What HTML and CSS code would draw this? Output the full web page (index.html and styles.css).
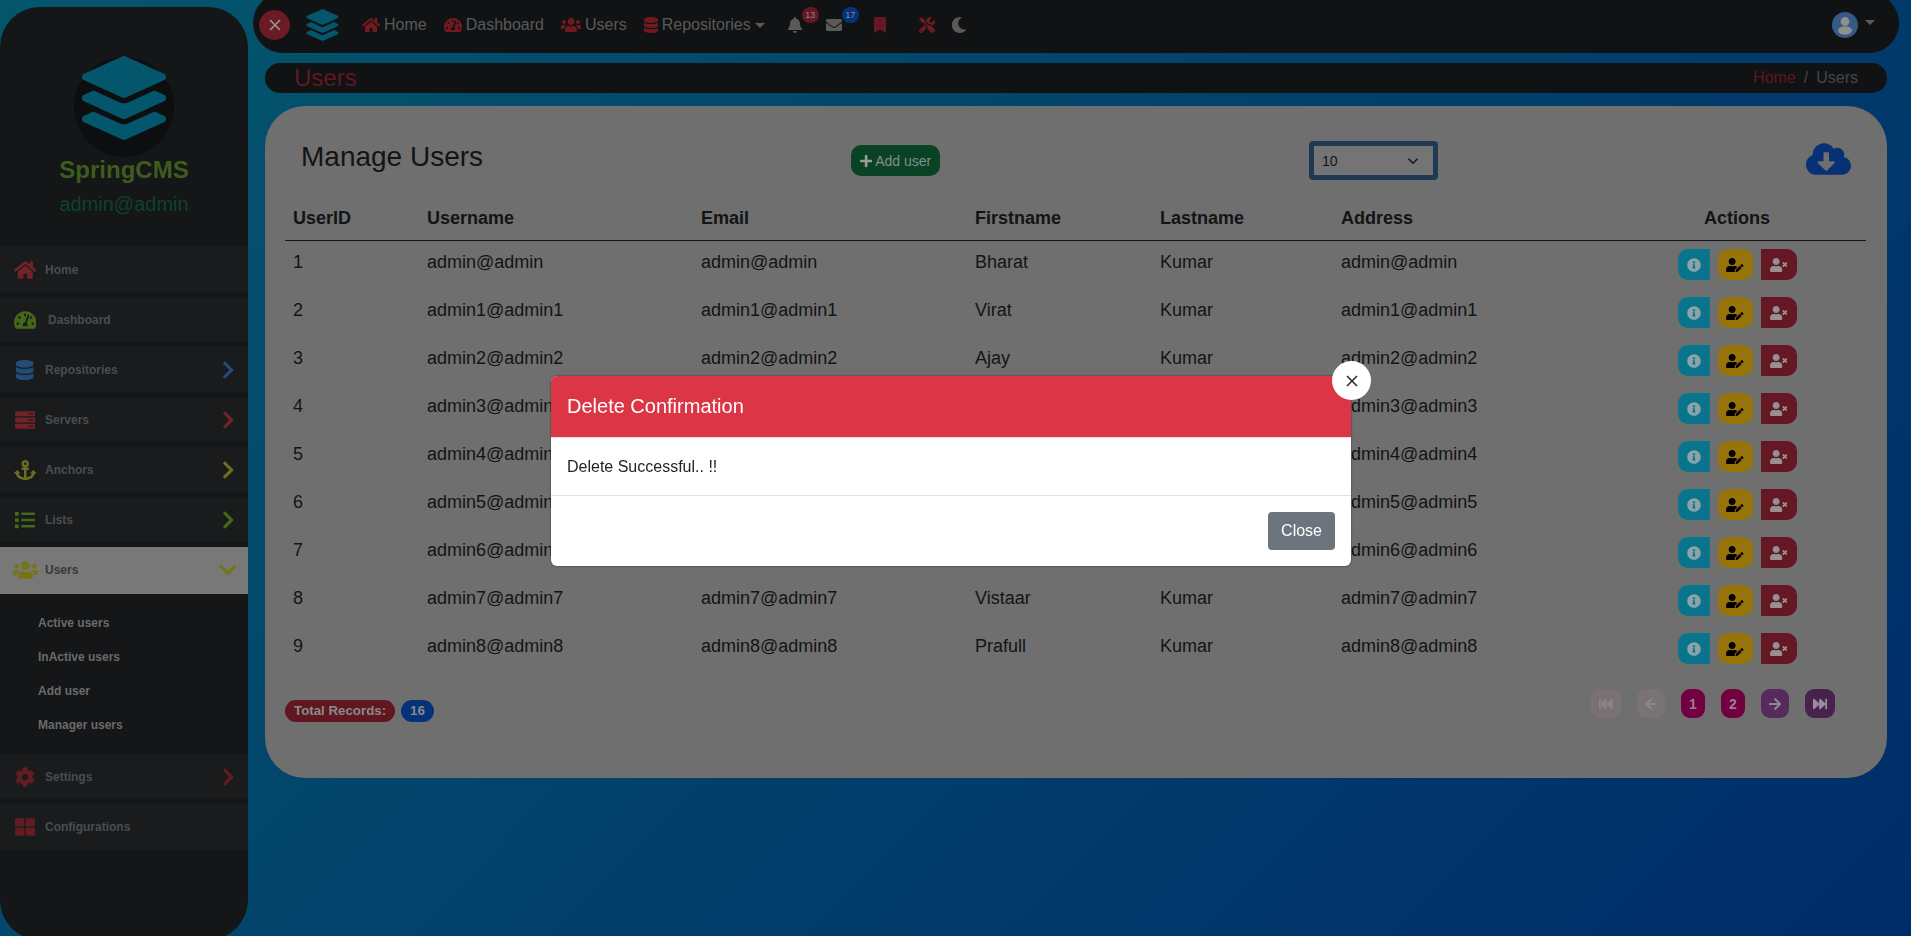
FILE: index.html
```html
<!doctype html>
<html>
 <head>
	<meta charset="UTF-8">
	<title>SpringCMS - Manage Users</title>
	<link rel="stylesheet" href="styles.css">
 </head>
 <body>
	<!-- icon paths, used by every <use> below -->
	<svg class="sprite">
		<defs>
			<path id="i_home" d="M280.37 148.26L96 300.11V464a16 16 0 0 0 16 16l112.06-.29a16 16 0 0 0 15.92-16V368a16 16 0 0 1 16-16h64a16 16 0 0 1 16 16v95.64a16 16 0 0 0 16 16.05L464 480a16 16 0 0 0 16-16V300L295.67 148.26a12.19 12.19 0 0 0-15.3 0zM571.6 251.47L488 182.56V44.05a12 12 0 0 0-12-12h-56a12 12 0 0 0-12 12v72.61L318.47 43a48 48 0 0 0-61 0L4.34 251.47a12 12 0 0 0-1.6 16.9l25.5 31A12 12 0 0 0 45.15 301l235.22-193.74a12.19 12.19 0 0 1 15.3 0L530.9 301a12 12 0 0 0 16.9-1.6l25.5-31a12 12 0 0 0-1.7-16.93z"/>
			<path id="i_gauge" d="M288 32C128.94 32 0 160.94 0 320c0 52.8 14.25 102.26 39.06 144.8 5.61 9.62 16.3 15.2 27.44 15.2h443c11.14 0 21.83-5.58 27.44-15.2C561.75 422.26 576 372.8 576 320c0-159.06-128.94-288-288-288zm0 64c14.71 0 26.58 10.13 30.32 23.65-1.11 2.26-2.64 4.23-3.45 6.67l-9.22 27.67c-5.13 3.49-10.97 6.01-17.64 6.01-17.67 0-32-14.33-32-32S270.33 96 288 96zM96 384c-17.67 0-32-14.33-32-32s14.33-32 32-32 32 14.33 32 32-14.33 32-32 32zm48-160c-17.67 0-32-14.33-32-32s14.33-32 32-32 32 14.33 32 32-14.33 32-32 32zm246.77-72.41l-61.33 184C343.13 347.33 352 364.54 352 384c0 11.72-3.38 22.55-8.88 32H232.88c-5.5-9.45-8.88-20.28-8.88-32 0-33.94 26.5-61.43 59.9-63.59l61.34-184.01c4.17-12.56 17.73-19.45 30.36-15.17 12.57 4.19 19.35 17.79 15.17 30.36zm14.66 57.2l15.52-46.55c3.47-1.29 7.13-2.23 11.05-2.23 17.67 0 32 14.33 32 32s-14.33 32-32 32c-11.38-.01-20.89-6.28-26.57-15.22zM480 384c-17.67 0-32-14.33-32-32s14.33-32 32-32 32 14.33 32 32-14.33 32-32 32z"/>
			<path id="i_users" d="M96 224c35.3 0 64-28.7 64-64s-28.7-64-64-64-64 28.7-64 64 28.7 64 64 64zm448 0c35.3 0 64-28.7 64-64s-28.7-64-64-64-64 28.7-64 64 28.7 64 64 64zm32 32h-64c-17.6 0-33.5 7.1-45.1 18.6 40.3 22.1 68.9 62 75.1 109.4h66c17.7 0 32-14.3 32-32v-32c0-35.3-28.7-64-64-64zm-256 0c61.9 0 112-50.1 112-112S381.9 32 320 32 208 82.1 208 144s50.1 112 112 112zm76.8 32h-8.3c-20.8 10-43.9 16-68.5 16s-47.6-6-68.5-16h-8.3C179.6 288 128 339.6 128 403.2V432c0 26.5 21.5 48 48 48h288c26.5 0 48-21.5 48-48v-28.8c0-63.6-51.6-115.2-115.2-115.2zm-223.7-13.4C161.5 263.1 145.6 256 128 256H64c-35.3 0-64 28.7-64 64v32c0 17.7 14.3 32 32 32h65.9c6.3-47.4 34.9-87.3 75.2-109.4z"/>
			<path id="i_db" d="M448 73.143v45.714C448 159.143 347.667 192 224 192S0 159.143 0 118.857V73.143C0 32.857 100.333 0 224 0s224 32.857 224 73.143zM448 176v102.857C448 319.143 347.667 352 224 352S0 319.143 0 278.857V176c48.125 33.143 136.208 48.572 224 48.572S399.874 209.143 448 176zm0 160v102.857C448 479.143 347.667 512 224 512S0 479.143 0 438.857V336c48.125 33.143 136.208 48.572 224 48.572S399.874 369.143 448 336z"/>
			<path id="i_server" d="M480 160H32c-17.673 0-32-14.327-32-32V64c0-17.673 14.327-32 32-32h448c17.673 0 32 14.327 32 32v64c0 17.673-14.327 32-32 32zm-48-88c-13.255 0-24 10.745-24 24s10.745 24 24 24 24-10.745 24-24-10.745-24-24-24zm-64 0c-13.255 0-24 10.745-24 24s10.745 24 24 24 24-10.745 24-24-10.745-24-24-24zm112 248H32c-17.673 0-32-14.327-32-32v-64c0-17.673 14.327-32 32-32h448c17.673 0 32 14.327 32 32v64c0 17.673-14.327 32-32 32zm-48-88c-13.255 0-24 10.745-24 24s10.745 24 24 24 24-10.745 24-24-10.745-24-24-24zm-64 0c-13.255 0-24 10.745-24 24s10.745 24 24 24 24-10.745 24-24-10.745-24-24-24zm112 248H32c-17.673 0-32-14.327-32-32v-64c0-17.673 14.327-32 32-32h448c17.673 0 32 14.327 32 32v64c0 17.673-14.327 32-32 32zm-48-88c-13.255 0-24 10.745-24 24s10.745 24 24 24 24-10.745 24-24-10.745-24-24-24zm-64 0c-13.255 0-24 10.745-24 24s10.745 24 24 24 24-10.745 24-24-10.745-24-24-24z"/>
			<path id="i_anchor" d="M12.971 352h32.394C67.172 454.735 181.944 512 288 512c106.229 0 220.853-57.38 242.635-160h32.394c10.691 0 16.045-12.926 8.485-20.485l-67.029-67.029c-4.686-4.686-12.284-4.686-16.971 0l-67.029 67.029c-7.56 7.56-2.206 20.485 8.485 20.485h35.146c-20.29 54.317-84.963 86.588-144.117 94.015V256h52c6.627 0 12-5.373 12-12v-40c0-6.627-5.373-12-12-12h-52v-5.47c37.281-13.178 63.995-48.725 64-90.518C384.005 43.772 341.605.738 289.37.01 235.723-.739 192 42.525 192 96c0 41.798 26.716 77.35 64 90.53V192h-52c-6.627 0-12 5.373-12 12v40c0 6.627 5.373 12 12 12h52v190.015c-58.936-7.399-123.82-39.679-144.117-94.015h35.146c10.691 0 16.045-12.926 8.485-20.485l-67.029-67.029c-4.686-4.686-12.284-4.686-16.971 0L4.485 331.515C-3.074 339.074 2.28 352 12.971 352zM288 64c17.645 0 32 14.355 32 32s-14.355 32-32 32-32-14.355-32-32 14.355-32 32-32z"/>
			<path id="i_list" d="M80 368H16a16 16 0 0 0-16 16v64a16 16 0 0 0 16 16h64a16 16 0 0 0 16-16v-64a16 16 0 0 0-16-16zm0-320H16A16 16 0 0 0 0 64v64a16 16 0 0 0 16 16h64a16 16 0 0 0 16-16V64a16 16 0 0 0-16-16zm0 160H16a16 16 0 0 0-16 16v64a16 16 0 0 0 16 16h64a16 16 0 0 0 16-16v-64a16 16 0 0 0-16-16zm416 176H176a16 16 0 0 0-16 16v32a16 16 0 0 0 16 16h320a16 16 0 0 0 16-16v-32a16 16 0 0 0-16-16zm0-320H176a16 16 0 0 0-16 16v32a16 16 0 0 0 16 16h320a16 16 0 0 0 16-16V80a16 16 0 0 0-16-16zm0 160H176a16 16 0 0 0-16 16v32a16 16 0 0 0 16 16h320a16 16 0 0 0 16-16v-32a16 16 0 0 0-16-16z"/>
			<path id="i_cog" d="M487.4 315.7l-42.6-24.6c4.3-23.2 4.3-47 0-70.2l42.6-24.6c4.9-2.8 7.1-8.6 5.5-14-11.1-35.6-30-67.8-54.7-94.6-3.8-4.1-10-5.1-14.8-2.3L380.8 110c-17.9-15.4-38.5-27.3-60.8-35.1V25.8c0-5.6-3.9-10.5-9.4-11.7-36.7-8.2-74.3-7.8-109.2 0-5.5 1.2-9.4 6.1-9.4 11.7V75c-22.2 7.9-42.8 19.8-60.8 35.1L88.7 85.5c-4.9-2.8-11-1.9-14.8 2.3-24.7 26.7-43.6 58.9-54.7 94.6-1.7 5.4.6 11.2 5.5 14L67.3 221c-4.3 23.2-4.3 47 0 70.2l-42.6 24.6c-4.9 2.8-7.1 8.6-5.5 14 11.1 35.6 30 67.8 54.7 94.6 3.8 4.1 10 5.1 14.8 2.3l42.6-24.6c17.9 15.4 38.5 27.3 60.8 35.1v49.2c0 5.6 3.9 10.5 9.4 11.7 36.7 8.2 74.3 7.8 109.2 0 5.5-1.2 9.4-6.1 9.4-11.7v-49.2c22.2-7.9 42.8-19.8 60.8-35.1l42.6 24.6c4.9 2.8 11 1.9 14.8-2.3 24.7-26.7 43.6-58.9 54.7-94.6 1.5-5.5-.7-11.3-5.6-14.1zM256 336c-44.1 0-80-35.9-80-80s35.9-80 80-80 80 35.9 80 80-35.9 80-80 80z"/>
			<path id="i_grid" d="M296 32h192c13.255 0 24 10.745 24 24v160c0 13.255-10.745 24-24 24H296c-13.255 0-24-10.745-24-24V56c0-13.255 10.745-24 24-24zm-80 0H24C10.745 32 0 42.745 0 56v160c0 13.255 10.745 24 24 24h192c13.255 0 24-10.745 24-24V56c0-13.255-10.745-24-24-24zM0 296v160c0 13.255 10.745 24 24 24h192c13.255 0 24-10.745 24-24V296c0-13.255-10.745-24-24-24H24c-13.255 0-24 10.745-24 24zm296 184h192c13.255 0 24-10.745 24-24V296c0-13.255-10.745-24-24-24H296c-13.255 0-24 10.745-24 24v160c0 13.255 10.745 24 24 24z"/>
			<path id="i_right" d="M285.476 272.971L91.132 467.314c-9.373 9.373-24.569 9.373-33.941 0l-22.667-22.667c-9.357-9.357-9.375-24.522-.04-33.901L188.505 256 34.484 101.255c-9.335-9.379-9.317-24.544.04-33.901l22.667-22.667c9.373-9.373 24.569-9.373 33.941 0L285.475 239.03c9.373 9.372 9.373 24.568.001 33.941z"/>
			<path id="i_down" d="M207.029 381.476L12.686 187.132c-9.373-9.373-9.373-24.569 0-33.941l22.667-22.667c9.357-9.357 24.522-9.375 33.901-.04L224 284.505l154.745-154.021c9.379-9.335 24.544-9.317 33.901.04l22.667 22.667c9.373 9.373 9.373 24.569 0 33.941L240.971 381.476c-9.373 9.372-24.569 9.372-33.942 0z"/>
			<path id="i_layers" d="M12.41 148.02l232.94 105.67c6.8 3.09 14.49 3.09 21.29 0l232.94-105.67c16.55-7.51 16.55-32.52 0-40.03L266.65 2.31a25.607 25.607 0 0 0-21.29 0L12.41 107.98c-16.55 7.51-16.55 32.53 0 40.04zm487.18 88.28l-58.09-26.33-161.64 73.27c-7.56 3.43-15.59 5.17-23.86 5.17s-16.29-1.74-23.86-5.17L70.51 209.97l-58.1 26.33c-16.55 7.5-16.55 32.5 0 40l232.94 105.59c6.8 3.08 14.49 3.08 21.29 0L499.59 276.3c16.55-7.5 16.55-32.5 0-40zm0 127.8l-57.87-26.23-161.86 73.37c-7.56 3.43-15.59 5.17-23.86 5.17s-16.29-1.74-23.86-5.17L70.29 337.87 12.41 364.1c-16.55 7.5-16.55 32.5 0 40l232.94 105.59c6.8 3.08 14.49 3.08 21.29 0L499.59 404.1c16.55-7.5 16.55-32.5 0-40z"/>
			<path id="i_bell" d="M224 512c35.32 0 63.97-28.65 63.97-64H160.03c0 35.35 28.65 64 63.97 64zm215.39-149.71c-19.32-20.76-55.47-51.99-55.47-154.29 0-77.7-54.48-139.9-127.94-155.16V32c0-17.67-14.32-32-31.98-32s-31.98 14.33-31.98 32v20.84C118.56 68.1 64.08 130.3 64.08 208c0 102.3-36.15 133.53-55.47 154.29-6 6.45-8.66 14.16-8.61 21.71.11 16.4 12.98 32 32.1 32h383.8c19.12 0 32-15.6 32.1-32 .05-7.55-2.61-15.27-8.61-21.71z"/>
			<path id="i_mail" d="M502.3 190.8c3.9-3.1 9.7-.2 9.7 4.7V400c0 26.5-21.5 48-48 48H48c-26.5 0-48-21.5-48-48V195.6c0-5 5.7-7.8 9.7-4.7 22.4 17.4 52.1 39.5 154.1 113.6 21.1 15.4 56.7 47.8 92.2 47.6 35.7.3 72-32.8 92.3-47.6 102-74.1 131.6-96.3 154-113.7zM256 320c23.2.4 56.6-29.2 73.4-41.4 132.7-96.3 142.8-104.7 173.4-128.7 5.8-4.5 9.2-11.5 9.2-18.9v-19c0-26.5-21.5-48-48-48H48C21.5 64 0 85.5 0 112v19c0 7.4 3.4 14.3 9.2 18.9 30.6 23.9 40.7 32.4 173.4 128.7 16.8 12.2 50.2 41.8 73.4 41.4z"/>
			<path id="i_bookmark" d="M0 512V48C0 21.49 21.49 0 48 0h288c26.51 0 48 21.49 48 48v464L192 400 0 512z"/>
			<path id="i_tools" d="M501.1 395.7L384 278.6c-23.1-23.1-57.6-27.6-85.4-13.9L192 158.1V96L64 0 0 64l96 128h62.1l106.6 106.6c-13.6 27.8-9.2 62.3 13.9 85.4l117.1 117.1c14.6 14.6 38.2 14.6 52.7 0l52.7-52.7c14.5-14.6 14.5-38.2 0-52.7zM331.7 225c28.3 0 54.9 11 74.9 31l19.4 19.4c15.8-6.9 30.8-16.5 43.8-29.5 37.1-37.1 49.7-89.3 37.9-136.7-2.2-9-13.5-12.1-20.1-5.5l-74.4 74.4-67.9-11.3L334 98.9l74.4-74.4c6.6-6.6 3.4-17.9-5.7-20.2-47.4-11.7-99.6.9-136.6 37.9-28.5 28.5-41.9 66.1-41.2 103.6l82.1 82.1c8.1-1.9 16.5-2.9 24.7-2.9zm-103.9 82l-56.7-56.7L18.7 402.8c-25 25-25 65.5 0 90.5s65.5 25 90.5 0l123.6-123.6c-7.6-19.9-9.9-41.6-5-62.7zM64 472c-13.2 0-24-10.8-24-24 0-13.3 10.7-24 24-24s24 10.7 24 24c0 13.2-10.7 24-24 24z"/>
			<path id="i_moon" d="M283.211 512c78.962 0 151.079-35.925 198.857-94.792 7.068-8.708-.639-21.43-11.562-19.35-124.203 23.654-238.262-71.576-238.262-196.954 0-72.222 38.662-138.635 101.498-174.394 9.686-5.512 7.25-20.197-3.756-22.23A258.156 258.156 0 0 0 283.211 0c-141.309 0-256 114.511-256 256 0 141.309 114.511 256 256 256z"/>
			<path id="i_plus" d="M416 208H272V64c0-17.67-14.33-32-32-32h-32c-17.67 0-32 14.33-32 32v144H32c-17.67 0-32 14.33-32 32v32c0 17.67 14.33 32 32 32h144v144c0 17.67 14.33 32 32 32h32c17.67 0 32-14.33 32-32V304h144c17.67 0 32-14.33 32-32v-32c0-17.67-14.33-32-32-32z"/>
			<path id="i_cloud" d="M537.6 226.6c4.1-10.7 6.4-22.4 6.4-34.6 0-53-43-96-96-96-19.7 0-38.1 6-53.3 16.2C367 64.2 315.3 32 256 32c-88.4 0-160 71.6-160 160 0 2.7.1 5.4.2 8.1C40.2 219.8 0 273.2 0 336c0 79.5 64.5 144 144 144h368c70.7 0 128-57.3 128-128 0-61.9-44-113.6-102.4-125.4zm-132.9 88.7L299.3 420.7c-6.2 6.2-16.4 6.2-22.6 0L171.3 315.3c-10.1-10.1-2.9-27.3 11.3-27.3H248V176c0-8.8 7.2-16 16-16h48c8.8 0 16 7.2 16 16v112h65.4c14.2 0 21.4 17.2 11.3 27.3z"/>
			<path id="i_info" d="M256 8C119.043 8 8 119.083 8 256c0 136.997 111.043 248 248 248s248-111.003 248-248C504 119.083 392.957 8 256 8zm0 110c23.196 0 42 18.804 42 42s-18.804 42-42 42-42-18.804-42-42 18.804-42 42-42zm56 254c0 6.627-5.373 12-12 12h-88c-6.627 0-12-5.373-12-12v-24c0-6.627 5.373-12 12-12h12v-64h-12c-6.627 0-12-5.373-12-12v-24c0-6.627 5.373-12 12-12h64c6.627 0 12 5.373 12 12v100h12c6.627 0 12 5.373 12 12v24z"/>
			<path id="i_uedit" d="M224 256c70.7 0 128-57.3 128-128S294.7 0 224 0 96 57.3 96 128s57.3 128 128 128zm89.6 32h-16.7c-22.2 10.2-46.9 16-72.9 16s-50.6-5.8-72.9-16h-16.7C60.2 288 0 348.2 0 422.4V464c0 26.5 21.5 48 48 48h274.9c-2.4-6.8-3.4-14-2.6-21.3l6.8-60.9 1.2-11.1 7.9-7.9 77.3-77.3c-24.5-27.7-60-45.5-99.9-45.5zm45.3 145.3l-6.8 61c-1.1 10.2 7.5 18.8 17.6 17.6l60.9-6.8 137.9-137.9-71.7-71.7-137.9 137.8zM633 268.9L595.1 231c-9.3-9.3-24.5-9.3-33.8 0l-37.8 37.8-4.1 4.1 71.8 71.7 41.8-41.8c9.3-9.4 9.3-24.5 0-33.9z"/>
			<path id="i_utimes" d="M589.6 240l45.6-45.6c6.3-6.3 6.3-16.5 0-22.8l-22.8-22.8c-6.3-6.3-16.5-6.3-22.8 0L544 194.4l-45.6-45.6c-6.3-6.3-16.5-6.3-22.8 0l-22.8 22.8c-6.3 6.3-6.3 16.5 0 22.8l45.6 45.6-45.6 45.6c-6.3 6.3-6.3 16.5 0 22.8l22.8 22.8c6.3 6.3 16.5 6.3 22.8 0l45.6-45.6 45.6 45.6c6.3 6.3 16.5 6.3 22.8 0l22.8-22.8c6.3-6.3 6.3-16.5 0-22.8L589.6 240zM224 256c70.7 0 128-57.3 128-128S294.7 0 224 0 96 57.3 96 128s57.3 128 128 128zm89.6 32h-16.7c-22.2 10.2-46.9 16-72.9 16s-50.6-5.8-72.9-16h-16.7C60.2 288 0 348.2 0 422.4V464c0 26.5 21.5 48 48 48h352c26.5 0 48-21.5 48-48v-41.6c0-74.2-60.2-134.4-134.4-134.4z"/>
			<path id="i_first" d="M0 436V76c0-6.6 5.4-12 12-12h40c6.6 0 12 5.4 12 12v151.9L235.5 71.4C256.1 54.3 288 68.6 288 96v131.9L459.5 71.4C480.1 54.3 512 68.6 512 96v320c0 27.4-31.9 41.7-52.5 24.6L288 285.3V416c0 27.4-31.9 41.7-52.5 24.6L64 285.3V436c0 6.6-5.4 12-12 12H12c-6.6 0-12-5.4-12-12z"/>
			<path id="i_last" d="M512 76v360c0 6.6-5.4 12-12 12h-40c-6.6 0-12-5.4-12-12V284.1L276.5 440.6c-20.6 17.2-52.5 2.8-52.5-24.6V284.1L52.5 440.6C31.9 457.8 0 443.4 0 416V96c0-27.4 31.9-41.7 52.5-24.6L224 226.8V96c0-27.4 31.9-41.7 52.5-24.6L448 226.8V76c0-6.6 5.4-12 12-12h40c6.6 0 12 5.4 12 12z"/>
			<path id="i_prev" d="M257.5 445.1l-22.2 22.2c-9.4 9.4-24.6 9.4-33.9 0L7 273c-9.4-9.4-9.4-24.6 0-33.9L201.4 44.7c9.4-9.4 24.6-9.4 33.9 0l22.2 22.2c9.5 9.5 9.3 25-.4 34.3L136.6 216H424c13.3 0 24 10.7 24 24v32c0 13.3-10.7 24-24 24H136.6l120.5 114.8c9.8 9.3 10 24.8.4 34.3z"/>
			<path id="i_next" d="M190.5 66.9l22.2-22.2c9.4-9.4 24.6-9.4 33.9 0L441 239c9.4 9.4 9.4 24.6 0 33.9L246.6 467.3c-9.4 9.4-24.6 9.4-33.9 0l-22.2-22.2c-9.5-9.5-9.3-25 .4-34.3L311.4 296H24c-13.3 0-24-10.7-24-24v-32c0-13.3 10.7-24 24-24h287.4L190.9 101.2c-9.8-9.3-10-24.8-.4-34.3z"/>
		</defs>
	</svg>

	<div class="app">
		<!-- sidebar -->
		<aside class="sidebar">
			<div class="brand">
				<div class="brand_logo"><svg viewBox="0 0 512 512"><use href="#i_layers"/></svg></div>
				<div class="brand_name">SpringCMS</div>
				<div class="brand_user">admin@admin</div>
			</div>
			<ul class="menu">
				<li class="menu_item">
					<span class="menu_icon c_red"><svg viewBox="0 0 576 512"><use href="#i_home"/></svg></span>
					<span class="menu_label">Home</span>
				</li>
				<li class="menu_item">
					<span class="menu_icon c_green"><svg viewBox="0 0 576 512"><use href="#i_gauge"/></svg></span>
					<span class="menu_label menu_label_far">Dashboard</span>
				</li>
				<li class="menu_item">
					<span class="menu_icon c_blue"><svg viewBox="0 0 448 512"><use href="#i_db"/></svg></span>
					<span class="menu_label">Repositories</span>
					<span class="menu_arrow c_blue"><svg viewBox="0 0 320 512"><use href="#i_right"/></svg></span>
				</li>
				<li class="menu_item">
					<span class="menu_icon c_red"><svg viewBox="0 0 512 512"><use href="#i_server"/></svg></span>
					<span class="menu_label">Servers</span>
					<span class="menu_arrow c_red"><svg viewBox="0 0 320 512"><use href="#i_right"/></svg></span>
				</li>
				<li class="menu_item">
					<span class="menu_icon c_olive"><svg viewBox="0 0 576 512"><use href="#i_anchor"/></svg></span>
					<span class="menu_label">Anchors</span>
					<span class="menu_arrow c_olive"><svg viewBox="0 0 320 512"><use href="#i_right"/></svg></span>
				</li>
				<li class="menu_item">
					<span class="menu_icon c_green"><svg viewBox="0 0 512 512"><use href="#i_list"/></svg></span>
					<span class="menu_label">Lists</span>
					<span class="menu_arrow c_green"><svg viewBox="0 0 320 512"><use href="#i_right"/></svg></span>
				</li>
				<li class="menu_item menu_active">
					<span class="menu_icon c_olive"><svg viewBox="0 0 640 512"><use href="#i_users"/></svg></span>
					<span class="menu_label">Users</span>
					<span class="menu_arrow c_olive"><svg viewBox="0 0 448 512"><use href="#i_down"/></svg></span>
				</li>
				<li class="submenu">
					<a>Active users</a>
					<a>InActive users</a>
					<a>Add user</a>
					<a>Manager users</a>
				</li>
				<li class="menu_item">
					<span class="menu_icon c_dred"><svg viewBox="0 0 512 512"><use href="#i_cog"/></svg></span>
					<span class="menu_label">Settings</span>
					<span class="menu_arrow c_dred"><svg viewBox="0 0 320 512"><use href="#i_right"/></svg></span>
				</li>
				<li class="menu_item">
					<span class="menu_icon c_dred"><svg viewBox="0 0 512 512"><use href="#i_grid"/></svg></span>
					<span class="menu_label">Configurations</span>
				</li>
			</ul>
		</aside>

		<main class="main">
			<!-- top bar -->
			<nav class="topbar">
				<span class="toggle"><svg viewBox="0 0 16 16"><path d="M3 3l10 10M13 3L3 13"/></svg></span>
				<svg class="top_logo" viewBox="0 0 512 512"><use href="#i_layers"/></svg>
				<a class="top_link top_first"><svg viewBox="0 0 576 512"><use href="#i_home"/></svg>Home</a>
				<a class="top_link"><svg viewBox="0 0 576 512"><use href="#i_gauge"/></svg>Dashboard</a>
				<a class="top_link"><svg viewBox="0 0 640 512"><use href="#i_users"/></svg>Users</a>
				<a class="top_link"><svg viewBox="0 0 448 512"><use href="#i_db"/></svg>Repositories<i class="caret"></i></a>
				<span class="top_icon top_bell"><svg viewBox="0 0 448 512"><use href="#i_bell"/></svg><b class="count count_red">13</b></span>
				<span class="top_icon top_mail"><svg viewBox="0 0 512 512"><use href="#i_mail"/></svg><b class="count count_blue">17</b></span>
				<span class="top_icon top_mark"><svg viewBox="0 0 384 512"><use href="#i_bookmark"/></svg></span>
				<span class="top_icon top_tools"><svg viewBox="0 0 512 512"><use href="#i_tools"/></svg></span>
				<span class="top_icon top_moon"><svg viewBox="0 0 512 512"><use href="#i_moon"/></svg></span>
				<span class="avatar">
					<svg viewBox="0 0 26 26"><circle cx="13" cy="13" r="13" fill="#365a85"/><circle cx="13" cy="9.5" r="4.4" fill="#8f8f8f"/><ellipse cx="13" cy="18.5" rx="7" ry="4.2" fill="#8f8f8f"/></svg>
					<i class="caret"></i>
				</span>
			</nav>

			<!-- page title -->
			<div class="titlebar">
				<h1>Users</h1>
				<div class="crumbs"><a>Home</a><span class="crumb_sep">/</span><span>Users</span></div>
			</div>

			<section class="card">
				<div class="card_head">
					<h3>Manage Users</h3>
					<div><a class="btn_add"><svg viewBox="0 0 448 512"><use href="#i_plus"/></svg>Add user</a></div>
					<div><div class="page_size"><span>10</span><svg viewBox="0 0 16 16"><path d="M2 5l6 6 6-6"/></svg></div></div>
					<svg class="export" viewBox="0 0 640 512"><use href="#i_cloud"/></svg>
				</div>

				<table class="users">
					<colgroup>
						<col class="w_id"><col class="w_name"><col class="w_mail"><col class="w_first"><col class="w_last"><col class="w_addr"><col class="w_act">
					</colgroup>
					<thead>
						<tr><th>UserID</th><th>Username</th><th>Email</th><th>Firstname</th><th>Lastname</th><th>Address</th><th class="center">Actions</th></tr>
					</thead>
					<tbody>
						<tr><td>1</td><td>admin@admin</td><td>admin@admin</td><td>Bharat</td><td>Kumar</td><td>admin@admin</td><td><div class="acts"><a class="act act_info"><svg viewBox="0 0 512 512"><use href="#i_info"/></svg></a><a class="act act_edit"><svg viewBox="0 0 640 512"><use href="#i_uedit"/></svg></a><a class="act act_del"><svg viewBox="0 0 640 512"><use href="#i_utimes"/></svg></a></div></td></tr>
						<tr><td>2</td><td>admin1@admin1</td><td>admin1@admin1</td><td>Virat</td><td>Kumar</td><td>admin1@admin1</td><td><div class="acts"><a class="act act_info"><svg viewBox="0 0 512 512"><use href="#i_info"/></svg></a><a class="act act_edit"><svg viewBox="0 0 640 512"><use href="#i_uedit"/></svg></a><a class="act act_del"><svg viewBox="0 0 640 512"><use href="#i_utimes"/></svg></a></div></td></tr>
						<tr><td>3</td><td>admin2@admin2</td><td>admin2@admin2</td><td>Ajay</td><td>Kumar</td><td>admin2@admin2</td><td><div class="acts"><a class="act act_info"><svg viewBox="0 0 512 512"><use href="#i_info"/></svg></a><a class="act act_edit"><svg viewBox="0 0 640 512"><use href="#i_uedit"/></svg></a><a class="act act_del"><svg viewBox="0 0 640 512"><use href="#i_utimes"/></svg></a></div></td></tr>
						<tr><td>4</td><td>admin3@admin3</td><td>admin3@admin3</td><td>Rohit</td><td>Kumar</td><td>admin3@admin3</td><td><div class="acts"><a class="act act_info"><svg viewBox="0 0 512 512"><use href="#i_info"/></svg></a><a class="act act_edit"><svg viewBox="0 0 640 512"><use href="#i_uedit"/></svg></a><a class="act act_del"><svg viewBox="0 0 640 512"><use href="#i_utimes"/></svg></a></div></td></tr>
						<tr><td>5</td><td>admin4@admin4</td><td>admin4@admin4</td><td>Sachin</td><td>Kumar</td><td>admin4@admin4</td><td><div class="acts"><a class="act act_info"><svg viewBox="0 0 512 512"><use href="#i_info"/></svg></a><a class="act act_edit"><svg viewBox="0 0 640 512"><use href="#i_uedit"/></svg></a><a class="act act_del"><svg viewBox="0 0 640 512"><use href="#i_utimes"/></svg></a></div></td></tr>
						<tr><td>6</td><td>admin5@admin5</td><td>admin5@admin5</td><td>Rahul</td><td>Kumar</td><td>admin5@admin5</td><td><div class="acts"><a class="act act_info"><svg viewBox="0 0 512 512"><use href="#i_info"/></svg></a><a class="act act_edit"><svg viewBox="0 0 640 512"><use href="#i_uedit"/></svg></a><a class="act act_del"><svg viewBox="0 0 640 512"><use href="#i_utimes"/></svg></a></div></td></tr>
						<tr><td>7</td><td>admin6@admin6</td><td>admin6@admin6</td><td>Anil</td><td>Kumar</td><td>admin6@admin6</td><td><div class="acts"><a class="act act_info"><svg viewBox="0 0 512 512"><use href="#i_info"/></svg></a><a class="act act_edit"><svg viewBox="0 0 640 512"><use href="#i_uedit"/></svg></a><a class="act act_del"><svg viewBox="0 0 640 512"><use href="#i_utimes"/></svg></a></div></td></tr>
						<tr><td>8</td><td>admin7@admin7</td><td>admin7@admin7</td><td>Vistaar</td><td>Kumar</td><td>admin7@admin7</td><td><div class="acts"><a class="act act_info"><svg viewBox="0 0 512 512"><use href="#i_info"/></svg></a><a class="act act_edit"><svg viewBox="0 0 640 512"><use href="#i_uedit"/></svg></a><a class="act act_del"><svg viewBox="0 0 640 512"><use href="#i_utimes"/></svg></a></div></td></tr>
						<tr><td>9</td><td>admin8@admin8</td><td>admin8@admin8</td><td>Prafull</td><td>Kumar</td><td>admin8@admin8</td><td><div class="acts"><a class="act act_info"><svg viewBox="0 0 512 512"><use href="#i_info"/></svg></a><a class="act act_edit"><svg viewBox="0 0 640 512"><use href="#i_uedit"/></svg></a><a class="act act_del"><svg viewBox="0 0 640 512"><use href="#i_utimes"/></svg></a></div></td></tr>
					</tbody>
				</table>

				<div class="card_foot">
					<div class="totals"><span class="pill pill_red">Total Records:</span><span class="pill pill_blue">16</span></div>
					<div class="pager">
						<a class="pg pg_first"><svg viewBox="0 0 512 512"><use href="#i_first"/></svg></a>
						<a class="pg pg_prev"><svg viewBox="0 0 448 512"><use href="#i_prev"/></svg></a>
						<a class="pg pg_num">1</a>
						<a class="pg pg_num">2</a>
						<a class="pg pg_next"><svg viewBox="0 0 448 512"><use href="#i_next"/></svg></a>
						<a class="pg pg_last"><svg viewBox="0 0 512 512"><use href="#i_last"/></svg></a>
					</div>
				</div>
			</section>
		</main>
	</div>

	<!-- delete dialog -->
	<div class="modal">
		<span class="modal_x"><svg viewBox="0 0 16 16"><path d="M3 3l10 10M13 3L3 13"/></svg></span>
		<div class="modal_head">Delete Confirmation</div>
		<div class="modal_body">Delete Successful.. !!</div>
		<div class="modal_foot"><a class="btn_close">Close</a></div>
	</div>
 </body>
</html>
```

FILE: styles.css
```css
html,body{height:100%}
body{
	margin:0;
	overflow:hidden;
	font-family:"Liberation Sans",Arial,sans-serif;
	font-size:16px;
	color:#121416;
	background:linear-gradient(135deg,#04566c,#002c6a);
}
h1,h3{margin:0;font-weight:400}
ul{margin:0;padding:0;list-style:none}
svg{display:block;fill:currentColor}
.sprite{width:0;height:0;position:absolute}

.app{display:flex;height:100%}

/* sidebar colours */
.c_red{color:#722229}
.c_green{color:#456818}
.c_blue{color:#244c78}
.c_olive{color:#6c6c22}
.c_dred{color:#631d20}

.sidebar{
	flex:none;
	width:248px;
	height:933px;
	margin-top:7px;
	border-radius:40px;
	background:#141618;
}
.brand{
	display:flex;
	flex-direction:column;
	align-items:center;
	padding-top:50px;
}
.brand_logo{
	width:100px;
	height:100px;
	display:flex;
	justify-content:center;
	border-radius:50%;
	background:#0c0e0f;
	color:#04566c;
}
.brand_logo svg{width:84px;height:84px;margin-top:-1px}
.brand_name{
	margin-top:-1px;
	font-size:24px;
	line-height:28px;
	font-weight:700;
	color:#3e5c1d;
}
.brand_user{
	margin:8px 0 31px;
	font-size:20px;
	line-height:24px;
	color:#0f412e;
}

.menu_item{
	display:flex;
	align-items:center;
	height:45px;
	margin-bottom:5px;
	background:#191b1d;
}
.menu_icon{
	flex:none;
	width:26px;
	margin-left:12px;
	display:flex;
	justify-content:center;
}
.menu_icon svg{height:20px}
.menu_label{
	margin-left:7px;
	font-size:12px;
	font-weight:700;
	color:#494d51;
}
.menu_label_far{margin-left:10px}
.menu_arrow{
	margin-left:auto;
	margin-right:11px;
	width:18px;
	display:flex;
	justify-content:center;
}
.menu_arrow svg{height:20px}
.menu_active{
	box-sizing:border-box;
	height:47px;
	margin-bottom:0;
	padding-bottom:2px;
	background:#787878;
}
.menu_active .menu_label{color:#34383c}
.menu_active .c_olive{color:#767416}
.submenu{padding:12px 0}
.submenu a{
	display:block;
	height:34px;
	line-height:34px;
	padding-left:38px;
	font-size:12px;
	font-weight:700;
	color:#6a6a6a;
}

.main{flex:1;min-width:0;margin-left:5px}

/* top bar */
.topbar{
	display:flex;
	align-items:center;
	height:56px;
	margin:-7px 12px 0 0;
	padding:4px 0 0 6px;
	border-radius:30px;
	background:#101214;
	color:#5a5a5a;
}
.toggle{
	flex:none;
	width:31px;
	height:30px;
	display:flex;
	align-items:center;
	justify-content:center;
	border-radius:50%;
	background:#6c1a23;
	color:#969696;
}
.toggle svg{width:16px;height:16px;fill:none;stroke:currentColor;stroke-width:1.7}
.top_logo{width:33px;height:32px;margin-left:16px;color:#04566c}
.top_link{
	display:flex;
	align-items:center;
	gap:4px;
	margin-left:17px;
	white-space:nowrap;
}
.top_first{margin-left:23px}
.top_link svg{height:16px;color:#701a20}
.caret{
	display:block;
	margin-left:0;
	border:5px solid transparent;
	border-top-color:currentColor;
	border-bottom:0;
}
.top_icon{position:relative;flex:none}
.top_icon svg{height:16px}
.top_bell{margin-left:23px;width:38px}
.top_mail{width:48px}
.top_mark{width:45px;color:#641823}
.top_tools{width:32px;color:#701a20}
.count{
	position:absolute;
	top:-10px;
	min-width:17px;
	height:16px;
	border-radius:8px;
	font-size:9px;
	line-height:16px;
	font-weight:400;
	text-align:center;
	color:#8a8a8a;
}
.top_bell .count{left:14px}
.top_mail .count{left:16px}
.count_red{background:#641823}
.count_blue{background:#053279}
.avatar{
	margin-left:auto;
	margin-right:24px;
	display:flex;
	gap:7px;
}
.avatar svg{width:26px;height:26px}
.avatar .caret{margin-top:8px}

/* page title */
.titlebar{
	display:flex;
	align-items:center;
	justify-content:space-between;
	height:30px;
	margin:10px 24px 0 12px;
	padding:0 29px 0 29px;
	border-radius:15px;
	background:#101214;
}
.titlebar h1{font-size:24px;font-weight:400;color:#621720}
.crumbs{display:flex;color:#44474a}
.crumbs a{color:#60161d}
.crumb_sep{margin:0 8px}

/* users card */
.card{
	height:638px;
	margin:13px 24px 0 12px;
	padding-top:34px;
	border-radius:40px;
	background:#6f6f6f;
}
.card_head{
	display:grid;
	grid-template-columns:550px 458px 497px auto;
	align-items:center;
	height:39px;
	margin-bottom:17px;
	padding-left:36px;
}
.card_head h3{font-size:28px;line-height:34px;padding-bottom:7px}
.btn_add{
	display:inline-flex;
	align-items:center;
	gap:3px;
	height:31px;
	padding:0 9px;
	border-radius:10px;
	background:#0a4226;
	color:#838f89;
	font-size:14px;
	vertical-align:top;
}
.btn_add svg{height:14px;color:#95a099}
.page_size{
	display:flex;
	align-items:center;
	justify-content:space-between;
	box-sizing:border-box;
	width:129px;
	height:39px;
	padding:0 14px 0 8px;
	border:5px solid #203a56;
	border-radius:4px;
	background:#747474;
	font-size:14px;
}
.page_size svg{width:12px;height:12px;fill:none;stroke:#121416;stroke-width:2}
.export{width:45px;height:36px;margin-bottom:4px;color:#083175}

.users{
	width:1581px;
	margin-left:20px;
	border-collapse:collapse;
	table-layout:fixed;
	font-size:18px;
	line-height:27px;
}
.w_id{width:134px}
.w_name,.w_mail{width:274px}
.w_first{width:185px}
.w_last{width:181px}
.w_addr{width:275px}
.w_act{width:258px}
.users th,.users td{padding:8px;text-align:left;vertical-align:top}
.users th{padding:9px 8px 8px;border-bottom:1px solid #121416}
.users td{height:31px;border-bottom:1px solid #6c6c6c}
.users th.center{text-align:center}
.acts{display:flex;justify-content:center;gap:8px}
.act{
	display:flex;
	align-items:center;
	justify-content:center;
	height:31px;
}
.act svg{height:14px}
.act_info{width:32px;border-radius:10px 0 0 10px;background:#0a748d;color:#8aa3aa}
.act_edit{width:35px;border-radius:10px;background:#967409;color:#000}
.act_del{width:36px;border-radius:0 10px 10px 0;background:#641823;color:#998f92}

.card_foot{
	display:flex;
	justify-content:space-between;
	margin-top:16px;
	padding:0 52px 0 20px;
}
.totals{display:flex;gap:6px;margin-top:11px}
.pill{
	height:22px;
	padding:0 9px;
	border-radius:11px;
	font-size:13.3px;
	line-height:22px;
	font-weight:700;
	color:#8a8a8a;
}
.pill_red{background:#611720}
.pill_blue{background:#053279}
.pager{display:flex;gap:16px}
.pg{
	display:flex;
	align-items:center;
	justify-content:center;
	width:28px;
	height:29px;
	border-radius:9px;
	font-size:14px;
	font-weight:700;
	color:#958894;
}
.pg svg{height:14px}
.pg_first,.pg_last{width:30px}
.pg_first{background:#7a7177;color:#8c8389}
.pg_prev{background:#797277;color:#8c858a}
.pg_num{width:24px;background:#710040;color:#9e7d91}
.pg_next{background:#562b5b;color:#958299}
.pg_last{background:#46224c;color:#9b8ca0}

/* modal */
.modal{
	position:fixed;
	top:376px;
	left:551px;
	width:800px;
	border-radius:6px;
	background:#fff;
	color:#212529;
	box-shadow:0 0 2px rgba(0,0,0,.6);
}
.modal_x{
	position:absolute;
	top:-15px;
	right:-20px;
	width:39px;
	height:39px;
	display:flex;
	align-items:center;
	justify-content:center;
	border-radius:50%;
	background:#fff;
}
.modal_x svg{width:16px;height:16px;fill:none;stroke:#212529;stroke-width:1.5}
.modal_head{
	padding:15px 16px 16px;
	border-radius:6px 6px 0 0;
	border-bottom:1px solid #f0d9db;
	background:#dc3545;
	color:#fff;
	font-size:20px;
	line-height:30px;
}
.modal_body{
	padding:17px 16px 16px;
	border-bottom:1px solid #dee2e6;
	line-height:24px;
}
.modal_foot{
	display:flex;
	justify-content:flex-end;
	padding:16px;
}
.btn_close{
	height:38px;
	padding:0 13px;
	border-radius:4px;
	background:#6c757d;
	color:#fff;
	line-height:38px;
}
```
